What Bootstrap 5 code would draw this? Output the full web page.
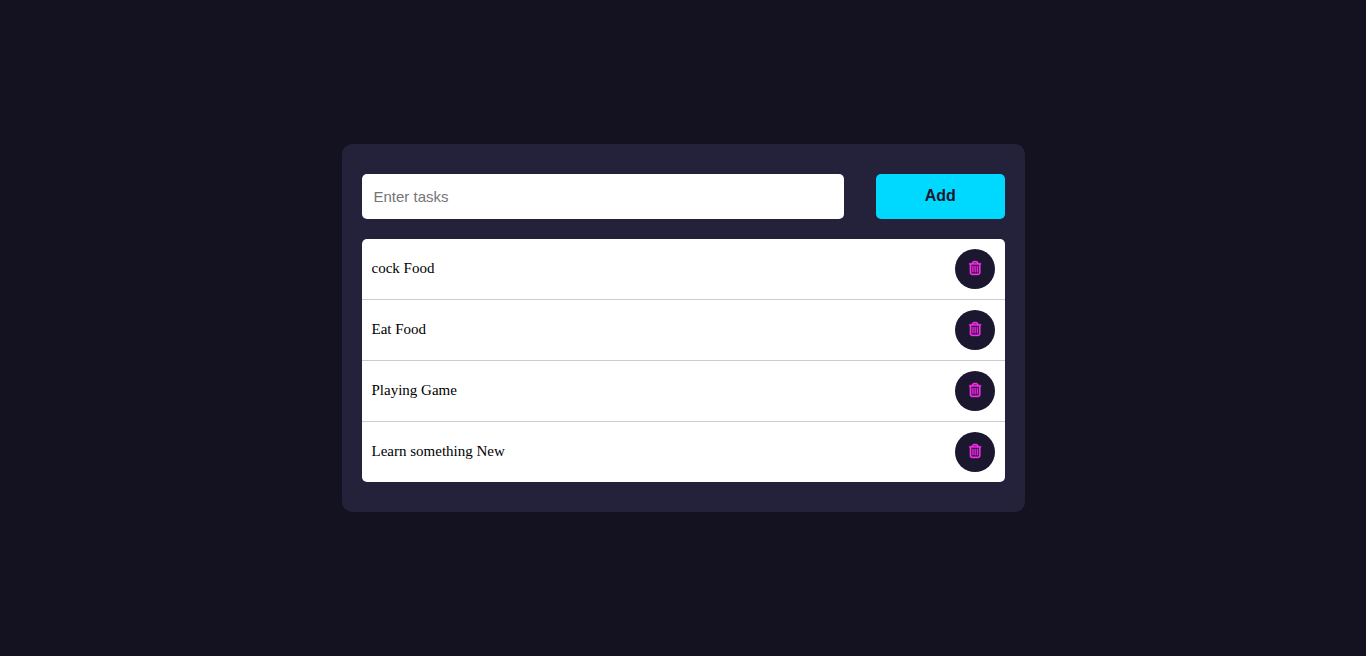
<!DOCTYPE html>
<html lang="en">
<head>
<meta charset="utf-8">
<title>Tasks</title>
<link rel="stylesheet" href="https://cdn.jsdelivr.net/npm/bootstrap@5.3.0/dist/css/bootstrap.min.css">
<style>
body { background: #141120; font-family: "Liberation Serif", serif; }
.todo-panel { width: 50%; background: #24213b; border-radius: 10px; padding: 30px 20px; }
.todo-form { margin-bottom: 20px; }
.todo-input.form-control { width: 75%; height: 45px; padding: 10px 12px; border: 0; border-radius: 5px; font-family: "Liberation Sans", sans-serif; font-size: 15px; color: #000; }
.todo-input.form-control::placeholder { color: #757575; opacity: 1; }
.todo-add.btn { width: 20%; height: 45px; padding: 0 0 2px; border: 0; border-radius: 5px; background: #00d9ff; color: #1a172e; font-family: "Liberation Sans", sans-serif; font-size: 16px; font-weight: 700; }
.todo-list { border-radius: 5px; }
.todo-list .list-group-item { padding: 10px; border-width: 0 0 1px; border-color: #ccc; color: #000; font-size: 15px; line-height: 18px; }
.todo-list .list-group-item:last-child { border-bottom-width: 0; }
.todo-del.btn { width: 40px; height: 40px; padding: 0 0 1px 1px; border: 0; border-radius: 50%; background: #1a172e; }
.todo-del svg { display: block; width: 12.25px; height: 14px; fill: #ff2df0; stroke: #ff2df0; stroke-width: 14; overflow: visible; margin-bottom: 2px; }
.todo-label { margin-top: -2px; }
</style>
</head>
<body>
<main class="min-vh-100 d-flex align-items-center justify-content-center">
  <div class="todo-panel">
    <form class="d-flex justify-content-between todo-form">
      <input class="form-control todo-input" type="text" placeholder="Enter tasks">
      <button class="btn todo-add" type="button">Add</button>
    </form>
    <ul class="list-group todo-list">
      <li class="list-group-item d-flex justify-content-between align-items-center"><span class="todo-label">cock Food</span>
        <button class="btn todo-del d-flex align-items-center justify-content-center" type="button" aria-label="Delete"><svg viewBox="0 0 448 512"><path d="M170.5 51.6L151.5 80h145l-19-28.4c-1.5-2.2-4-3.6-6.7-3.6H177.1c-2.7 0-5.2 1.3-6.7 3.6zm147-26.6L354.2 80H368h48 8c13.3 0 24 10.7 24 24s-10.7 24-24 24h-8V432c0 44.2-35.8 80-80 80H112c-44.2 0-80-35.8-80-80V128H24c-13.3 0-24-10.7-24-24S10.7 80 24 80h8H80 93.8l36.7-55.1C140.9 9.4 158.4 0 177.1 0h93.7c18.7 0 36.2 9.4 46.6 24.9zM80 128V432c0 17.7 14.3 32 32 32H336c17.7 0 32-14.3 32-32V128H80zm80 64V400c0 8.8-7.2 16-16 16s-16-7.2-16-16V192c0-8.8 7.2-16 16-16s16 7.2 16 16zm80 0V400c0 8.8-7.2 16-16 16s-16-7.2-16-16V192c0-8.8 7.2-16 16-16s16 7.2 16 16zm80 0V400c0 8.8-7.2 16-16 16s-16-7.2-16-16V192c0-8.8 7.2-16 16-16s16 7.2 16 16z"/></svg></button></li>
      <li class="list-group-item d-flex justify-content-between align-items-center"><span class="todo-label">Eat Food</span>
        <button class="btn todo-del d-flex align-items-center justify-content-center" type="button" aria-label="Delete"><svg viewBox="0 0 448 512"><path d="M170.5 51.6L151.5 80h145l-19-28.4c-1.5-2.2-4-3.6-6.7-3.6H177.1c-2.7 0-5.2 1.3-6.7 3.6zm147-26.6L354.2 80H368h48 8c13.3 0 24 10.7 24 24s-10.7 24-24 24h-8V432c0 44.2-35.8 80-80 80H112c-44.2 0-80-35.8-80-80V128H24c-13.3 0-24-10.7-24-24S10.7 80 24 80h8H80 93.8l36.7-55.1C140.9 9.4 158.4 0 177.1 0h93.7c18.7 0 36.2 9.4 46.6 24.9zM80 128V432c0 17.7 14.3 32 32 32H336c17.7 0 32-14.3 32-32V128H80zm80 64V400c0 8.8-7.2 16-16 16s-16-7.2-16-16V192c0-8.8 7.2-16 16-16s16 7.2 16 16zm80 0V400c0 8.8-7.2 16-16 16s-16-7.2-16-16V192c0-8.8 7.2-16 16-16s16 7.2 16 16zm80 0V400c0 8.8-7.2 16-16 16s-16-7.2-16-16V192c0-8.8 7.2-16 16-16s16 7.2 16 16z"/></svg></button></li>
      <li class="list-group-item d-flex justify-content-between align-items-center"><span class="todo-label">Playing Game</span>
        <button class="btn todo-del d-flex align-items-center justify-content-center" type="button" aria-label="Delete"><svg viewBox="0 0 448 512"><path d="M170.5 51.6L151.5 80h145l-19-28.4c-1.5-2.2-4-3.6-6.7-3.6H177.1c-2.7 0-5.2 1.3-6.7 3.6zm147-26.6L354.2 80H368h48 8c13.3 0 24 10.7 24 24s-10.7 24-24 24h-8V432c0 44.2-35.8 80-80 80H112c-44.2 0-80-35.8-80-80V128H24c-13.3 0-24-10.7-24-24S10.7 80 24 80h8H80 93.8l36.7-55.1C140.9 9.4 158.4 0 177.1 0h93.7c18.7 0 36.2 9.4 46.6 24.9zM80 128V432c0 17.7 14.3 32 32 32H336c17.7 0 32-14.3 32-32V128H80zm80 64V400c0 8.8-7.2 16-16 16s-16-7.2-16-16V192c0-8.8 7.2-16 16-16s16 7.2 16 16zm80 0V400c0 8.8-7.2 16-16 16s-16-7.2-16-16V192c0-8.8 7.2-16 16-16s16 7.2 16 16zm80 0V400c0 8.8-7.2 16-16 16s-16-7.2-16-16V192c0-8.8 7.2-16 16-16s16 7.2 16 16z"/></svg></button></li>
      <li class="list-group-item d-flex justify-content-between align-items-center"><span class="todo-label">Learn something New</span>
        <button class="btn todo-del d-flex align-items-center justify-content-center" type="button" aria-label="Delete"><svg viewBox="0 0 448 512"><path d="M170.5 51.6L151.5 80h145l-19-28.4c-1.5-2.2-4-3.6-6.7-3.6H177.1c-2.7 0-5.2 1.3-6.7 3.6zm147-26.6L354.2 80H368h48 8c13.3 0 24 10.7 24 24s-10.7 24-24 24h-8V432c0 44.2-35.8 80-80 80H112c-44.2 0-80-35.8-80-80V128H24c-13.3 0-24-10.7-24-24S10.7 80 24 80h8H80 93.8l36.7-55.1C140.9 9.4 158.4 0 177.1 0h93.7c18.7 0 36.2 9.4 46.6 24.9zM80 128V432c0 17.7 14.3 32 32 32H336c17.7 0 32-14.3 32-32V128H80zm80 64V400c0 8.8-7.2 16-16 16s-16-7.2-16-16V192c0-8.8 7.2-16 16-16s16 7.2 16 16zm80 0V400c0 8.8-7.2 16-16 16s-16-7.2-16-16V192c0-8.8 7.2-16 16-16s16 7.2 16 16zm80 0V400c0 8.8-7.2 16-16 16s-16-7.2-16-16V192c0-8.8 7.2-16 16-16s16 7.2 16 16z"/></svg></button></li>
    </ul>
  </div>
</main>
<script src="https://cdn.jsdelivr.net/npm/bootstrap@5.3.0/dist/js/bootstrap.bundle.min.js"></script>
</body>
</html>
